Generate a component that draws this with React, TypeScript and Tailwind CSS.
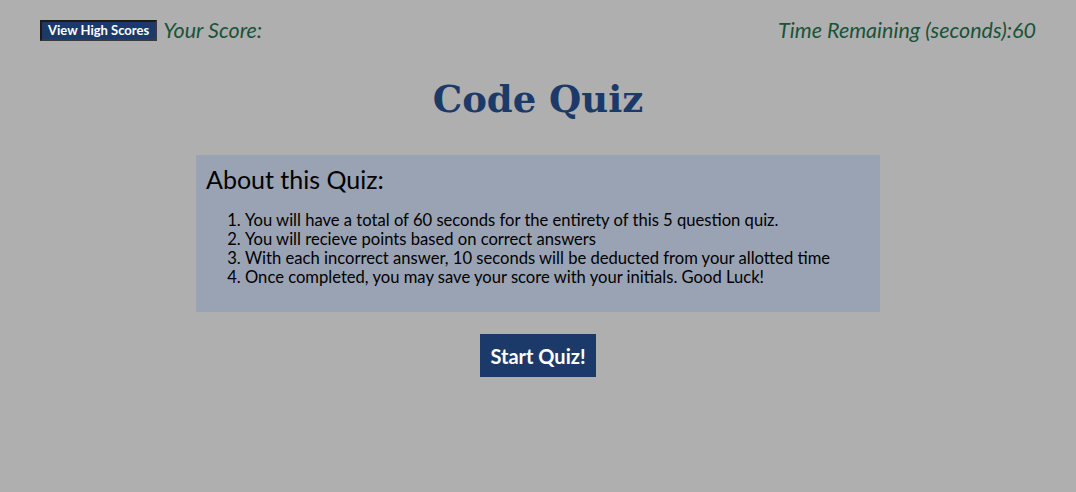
import React from "react";

const rules = [
  "You will have a total of 60 seconds for the entirety of this 5 question quiz.",
  "You will recieve points based on correct answers",
  "With each incorrect answer, 10 seconds will be deducted from your allotted time",
  "Once completed, you may save your score with your initials. Good Luck!",
];

export default function App() {
  return (
    <div className="min-h-[492px] w-full bg-[#afafaf] font-['Lato',sans-serif]">
      {/* header */}
      <header className="flex items-center justify-between pl-[40px] pr-[40px] pt-[14px]">
        <div className="flex items-center gap-[6px]">
          <button className="h-[21px] border-2 border-[#3a3a3a] border-t-[#1a1a1a] border-l-[#1a1a1a] bg-[#1c3a69] px-[6px] text-[13px] font-bold leading-none text-white">
            View High Scores
          </button>
          <span className="text-[21.5px] italic text-[#19533a]">Your Score:</span>
        </div>
        <span className="text-[21.5px] italic text-[#19533a]">Time Remaining (seconds):60</span>
      </header>

      <h1 className="mt-[29px] text-center font-['DejaVu_Serif',serif] text-[37px] font-bold leading-[48px] text-[#1c3a69]">
        Code Quiz
      </h1>

      <section className="mx-auto mt-[32px] h-[157px] w-[684px] bg-[#9aa3b3] px-[10px] pt-[10px]">
        <h2 className="text-[25px] leading-[28px] text-black">About this Quiz:</h2>
        <ol className="mt-[18px] list-decimal pl-[39px] text-[16.6px] leading-[19px] text-black">
          {rules.map((r) => (
            <li key={r}>{r}</li>
          ))}
        </ol>
      </section>

      <div className="mt-[22px] flex justify-center">
        <button className="h-[43px] w-[116px] bg-[#1c3a69] text-[20px] font-bold text-white">Start Quiz!</button>
      </div>
    </div>
  );
}
